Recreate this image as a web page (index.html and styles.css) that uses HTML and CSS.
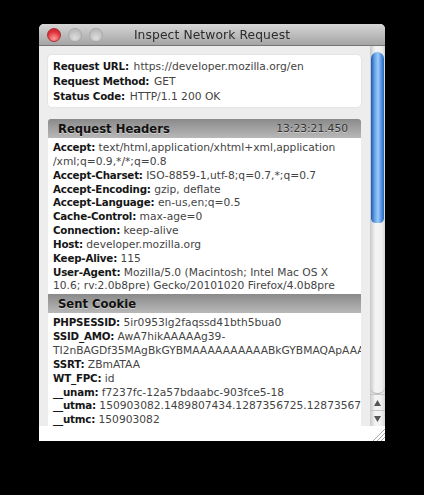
FILE: index.html
```html
<!DOCTYPE html>
<html lang="en">
<head>
  <meta charset="UTF-8" />
  <title>Inspect Network Request</title>
  <link rel="stylesheet" href="styles.css">
</head>
<body>
  <div class="window">
    <div class="titlebar">
      <div class="lights">
        <span class="light close"></span>
        <span class="light"></span>
        <span class="light"></span>
      </div>
      <div class="title">Inspect Network Request</div>
    </div>
    <div class="main">
      <div class="content">
        <div class="card">
          <div class="line"><b>Request URL:</b>&nbsp; https://developer.mozilla.org/en</div>
          <div class="line"><b>Request Method:</b>&nbsp; GET</div>
          <div class="line"><b>Status Code:</b>&nbsp; HTTP/1.1 200 OK</div>
        </div>
        <div class="section first">
          <span>Request Headers</span>
          <span class="time">13:23:21.450</span>
        </div>
        <div class="rows">
          <div class="row"><b>Accept:</b> text/html,application/xhtml+xml,application<br>/xml;q=0.9,*/*;q=0.8</div>
          <div class="row"><b>Accept-Charset:</b> ISO-8859-1,utf-8;q=0.7,*;q=0.7</div>
          <div class="row"><b>Accept-Encoding:</b> gzip, deflate</div>
          <div class="row"><b>Accept-Language:</b> en-us,en;q=0.5</div>
          <div class="row"><b>Cache-Control:</b> max-age=0</div>
          <div class="row"><b>Connection:</b> keep-alive</div>
          <div class="row"><b>Host:</b> developer.mozilla.org</div>
          <div class="row"><b>Keep-Alive:</b> 115</div>
          <div class="row"><b>User-Agent:</b> Mozilla/5.0 (Macintosh; Intel Mac OS X<br>10.6; rv:2.0b8pre) Gecko/20101020 Firefox/4.0b8pre</div>
        </div>
        <div class="section">
          <span>Sent Cookie</span>
        </div>
        <div class="rows">
          <div class="row"><b>PHPSESSID:</b> 5ir0953lg2faqssd41bth5bua0</div>
          <div class="row"><b>SSID_AMO:</b> AwA7hikAAAAAg39-<br>TI2nBAGDf35MAgBkGYBMAAAAAAAAAABkGYBMAQApAAAA</div>
          <div class="row"><b>SSRT:</b> ZBmATAA</div>
          <div class="row"><b>WT_FPC:</b> id</div>
          <div class="row"><b>__unam:</b> f7237fc-12a57bdaabc-903fce5-18</div>
          <div class="row"><b>__utma:</b> 150903082.1489807434.1287356725.1287356725</div>
          <div class="row"><b>__utmc:</b> 150903082</div>
        </div>
      </div>
      <div class="scrollbar">
        <div class="track">
          <div class="thumb"></div>
        </div>
        <div class="arrow"><svg width="9" height="8" viewBox="0 0 9 8"><path d="M4.5 1 L8 7 L1 7 Z" fill="#555"/></svg></div>
        <div class="arrow"><svg width="9" height="8" viewBox="0 0 9 8"><path d="M1 1 L8 1 L4.5 7 Z" fill="#555"/></svg></div>
      </div>
    </div>
    <div class="footer">
      <svg class="grip" width="13" height="13" viewBox="0 0 13 13">
        <path d="M1 13 L13 1 M5 13 L13 5 M9 13 L13 9" stroke="#a8a8a8" stroke-width="1" fill="none"/>
      </svg>
    </div>
  </div>
</body>
</html>
```

FILE: styles.css
```css
html, body {
  height: 100%;
  margin: 0;
}
body {
  background: #000;
  padding: 24px 39px;
  box-sizing: border-box;
  overflow: hidden;
  font-family: "DejaVu Sans", sans-serif;
  font-size: 10.7px;
  color: #444;
}
b {
  color: #161616;
  font-size: 10.3px;
  letter-spacing: -0.2px;
}
.window {
  width: 346px;
  height: 417px;
  display: flex;
  flex-direction: column;
  background: #fff;
  border-radius: 5px 5px 0 0;
  overflow: hidden;
  filter: blur(0.4px);
}
.titlebar {
  height: 22px;
  flex: none;
  display: flex;
  align-items: center;
  position: relative;
  background: linear-gradient(to bottom, #d6d6d6, #a4a4a4);
  border-bottom: 1px solid #767676;
  box-sizing: border-box;
}
.lights {
  display: flex;
  gap: 7px;
  padding-left: 8px;
}
.light {
  width: 14px;
  height: 14px;
  border-radius: 50%;
  box-sizing: border-box;
  border: 1px solid #a8a8a8;
  background: radial-gradient(circle at 50% 75%, #dedede, #bcbcbc 70%);
}
.light.close {
  border-color: #a83030;
  background: radial-gradient(circle at 50% 80%, #ff9c9c, #e0323a 60%, #b81e28);
}
.title {
  position: absolute;
  left: 0;
  right: 0;
  text-align: center;
  font-size: 12.3px;
  color: #2c2c2c;
  letter-spacing: 0.1px;
}
.main {
  flex: 1;
  min-height: 0;
  display: flex;
  background: #ededed;
}
.content {
  flex: 1;
  min-width: 0;
  overflow: hidden;
  padding: 9px 9px 0;
}
.card {
  background: #fff;
  border-radius: 4px;
  padding: 4px 5px 5px;
  height: 52px;
  box-sizing: border-box;
  margin-bottom: 12px;
  box-shadow: 0 0 2px rgba(0, 0, 0, 0.12);
}
.line {
  line-height: 14px;
  white-space: nowrap;
}
.line b {
  margin-right: -2px;
}
.section {
  height: 19px;
  display: flex;
  justify-content: space-between;
  align-items: center;
  padding: 0 13px 0 10px;
  background: linear-gradient(to bottom, #8a8a8a, #b8b8b8);
  font-size: 11.6px;
  font-weight: bold;
  color: #111;
  text-shadow: 0 1px 0 rgba(255, 255, 255, 0.45);
}
.section.first {
  border-radius: 3px 3px 0 0;
}
.section .time {
  font-size: 10.7px;
  font-weight: normal;
  color: #333;
}
.rows {
  background: #fff;
  padding: 3px 5px 1px;
  overflow: hidden;
}
.row {
  line-height: 13.85px;
  white-space: nowrap;
}
.scrollbar {
  width: 15px;
  flex: none;
  display: flex;
  flex-direction: column;
  background: linear-gradient(to right, #c8c8c8, #f4f4f4 35%, #f0f0f0 75%, #d6d6d6);
}
.track {
  flex: 1;
  padding-top: 6px;
  border-bottom: 1px solid #b4b4b4;
  border-radius: 0 0 7px 7px;
}
.thumb {
  width: 13px;
  height: 171px;
  margin-left: 1px;
  border-radius: 7px 7px 5px 5px;
  background: linear-gradient(to right, #1f58b4, #6aa6ea 30%, #9ccaf6 55%, #4f90e0 80%, #2566bc);
}
.arrow {
  height: 16px;
  display: flex;
  align-items: center;
  justify-content: center;
  border-top: 1px solid #c4c4c4;
  box-sizing: border-box;
}
.footer {
  height: 15px;
  flex: none;
  display: flex;
  justify-content: flex-end;
  background: #fff;
}
.grip {
  margin-top: 2px;
}
```
